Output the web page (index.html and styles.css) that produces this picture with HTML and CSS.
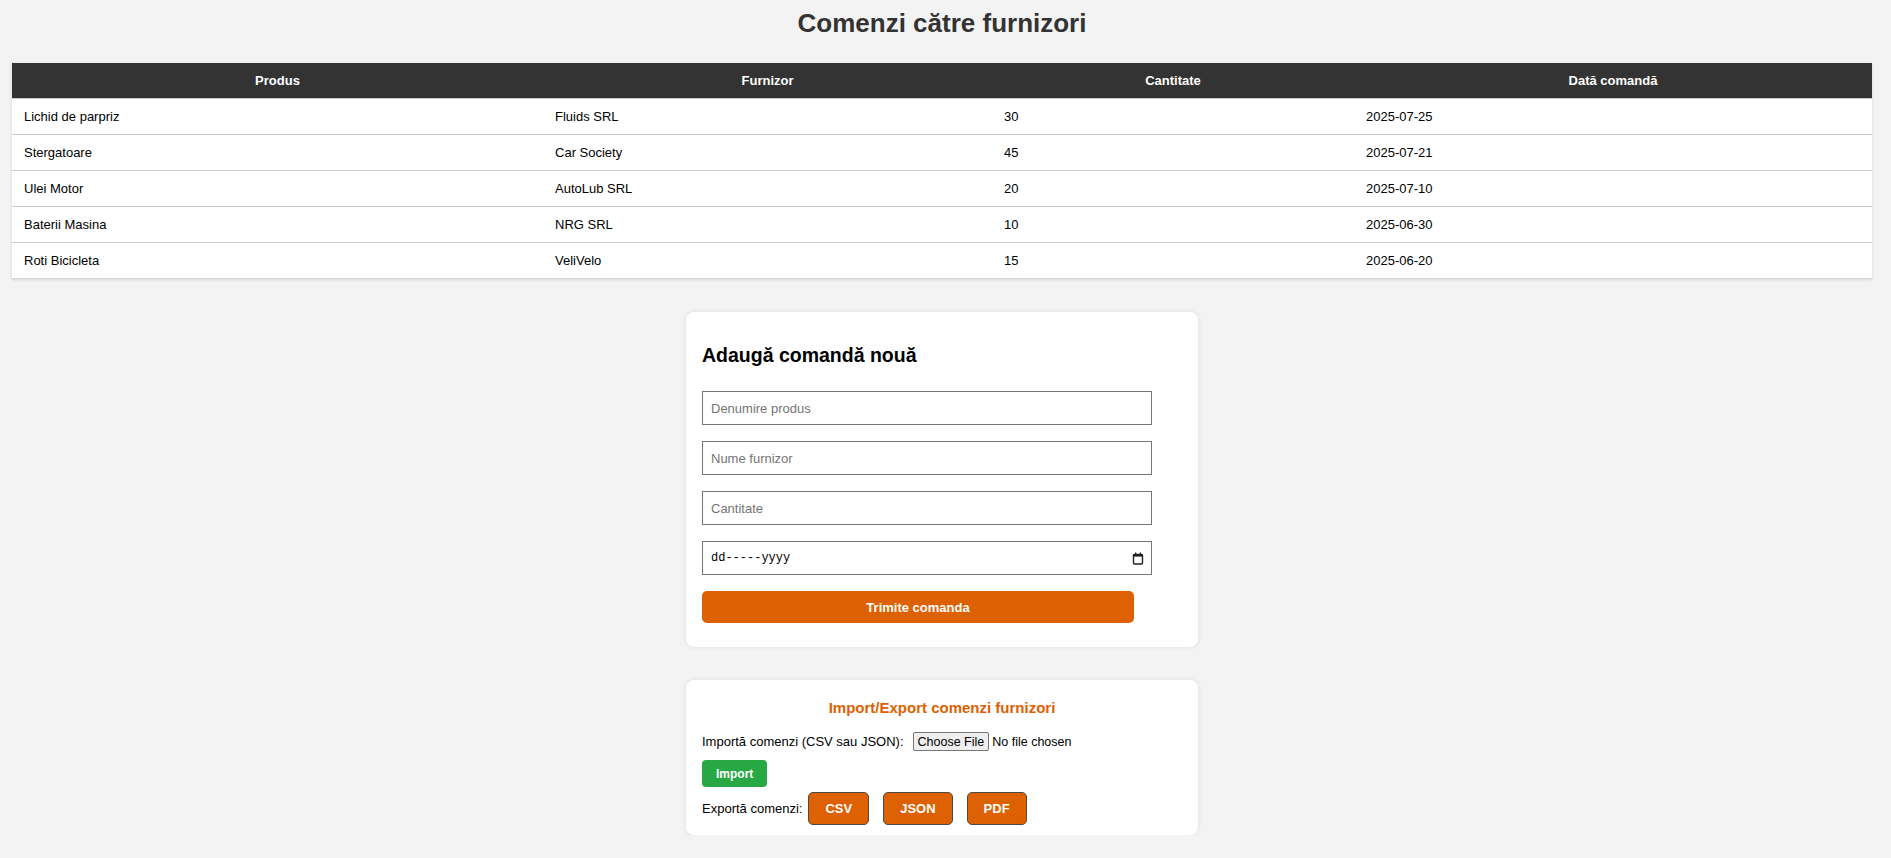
FILE: index.html
```html
<!DOCTYPE html>
<html lang="ro">
<head>
<meta charset="utf-8">
<title>Comenzi către furnizori</title>
<link rel="stylesheet" href="styles.css">
</head>
<body>
<main class="page">
  <h1 class="page-title">Comenzi către furnizori</h1>

  <table class="orders">
    <thead>
      <tr>
        <th class="col-prod">Produs</th>
        <th class="col-furn">Furnizor</th>
        <th class="col-qty">Cantitate</th>
        <th class="col-date">Dată comandă</th>
      </tr>
    </thead>
    <tbody>
      <tr><td>Lichid de parpriz</td><td>Fluids SRL</td><td>30</td><td>2025-07-25</td></tr>
      <tr><td>Stergatoare</td><td>Car Society</td><td>45</td><td>2025-07-21</td></tr>
      <tr><td>Ulei Motor</td><td>AutoLub SRL</td><td>20</td><td>2025-07-10</td></tr>
      <tr><td>Baterii Masina</td><td>NRG SRL</td><td>10</td><td>2025-06-30</td></tr>
      <tr><td>Roti Bicicleta</td><td>VeliVelo</td><td>15</td><td>2025-06-20</td></tr>
    </tbody>
  </table>

  <section class="card form-card">
    <h2 class="card-title">Adaugă comandă nouă</h2>
    <form class="order-form">
      <input class="field" type="text" placeholder="Denumire produs">
      <input class="field" type="text" placeholder="Nume furnizor">
      <input class="field" type="text" placeholder="Cantitate">
      <div class="field date-field">
        <span class="date-text">dd-----yyyy</span>
        <svg class="cal-icon" width="12" height="13" viewBox="0 0 12 13" aria-hidden="true">
          <rect x="1.5" y="2.5" width="9" height="9.5" rx="1" fill="none" stroke="#222" stroke-width="1.4"/>
          <rect x="1" y="2" width="10" height="2.6" fill="#222"/>
          <rect x="3" y="0.5" width="1.3" height="2" fill="#222"/>
          <rect x="7.7" y="0.5" width="1.3" height="2" fill="#222"/>
        </svg>
      </div>
      <button class="submit-btn" type="button">Trimite comanda</button>
    </form>
  </section>

  <section class="card io-card">
    <h3 class="io-title">Import/Export comenzi furnizori</h3>
    <div class="import-row">
      <label class="io-label">Importă comenzi (CSV sau JSON):</label>
      <input class="file-input" type="file">
    </div>
    <div class="import-action">
      <button class="import-btn" type="button">Import</button>
    </div>
    <div class="export-row">
      <span class="io-label export-label">Exportă comenzi:</span>
      <div class="export-buttons">
        <button class="export-btn" type="button">CSV</button>
        <button class="export-btn" type="button">JSON</button>
        <button class="export-btn" type="button">PDF</button>
      </div>
    </div>
  </section>
</main>
</body>
</html>
```

FILE: styles.css
```css
* {
  box-sizing: border-box;
}

html, body {
  margin: 0;
  background: #f3f3f3;
}

body {
  font-family: "Liberation Sans", Arial, sans-serif;
  color: #000;
}

.page {
  padding: 9px 19px 0 12px;
  display: flex;
  flex-direction: column;
  align-items: center;
}

.page-title {
  margin: 0 0 25px;
  font-size: 26px;
  line-height: 29px;
  font-weight: bold;
  color: #333;
  text-align: center;
}

.orders {
  width: 100%;
  border-collapse: collapse;
  background: #fff;
  box-shadow: 0 1px 3px rgba(0, 0, 0, 0.12);
  font-size: 13px;
}

.orders th {
  background: #333;
  color: #fff;
  font-weight: bold;
  line-height: 15px;
  padding: 10px 12px;
  text-align: center;
  border-bottom: 1px solid #ccc;
}

.orders td {
  line-height: 15px;
  padding: 10px 12px;
  text-align: left;
  border-bottom: 1px solid #ccc;
}

.orders tbody tr:last-child td {
  border-bottom: 1px solid #d6d6d6;
}

.col-prod { width: 28.55%; }
.col-furn { width: 24.14%; }
.col-qty { width: 19.46%; }
.col-date { width: 27.85%; }

.card {
  width: 512px;
  background: #fff;
  border-radius: 8px;
  box-shadow: 0 0 4px rgba(0, 0, 0, 0.1);
}

.form-card {
  margin-top: 33px;
  padding: 16px 16px 16px;
}

.card-title {
  margin: 16px 0 25px;
  font-size: 19.5px;
  line-height: 22px;
  font-weight: bold;
  color: #000;
}

.order-form {
  display: flex;
  flex-direction: column;
  align-items: flex-start;
}

.field {
  width: 450px;
  height: 34px;
  margin: 0 0 16px;
  padding: 0 8px;
  border: 1px solid #767676;
  border-radius: 0;
  background: #fff;
  font-family: "Liberation Sans", Arial, sans-serif;
  font-size: 13px;
  color: #000;
  outline: none;
}

.field::placeholder {
  color: #757575;
}

.date-field {
  display: flex;
  align-items: center;
  justify-content: space-between;
  padding: 0 7px 0 8px;
}

.date-text {
  font-family: "Liberation Mono", "DejaVu Sans Mono", monospace;
  font-size: 12px;
  color: #000;
}

.cal-icon {
  display: block;
}

.submit-btn {
  width: 90%;
  height: 32px;
  margin: 0 0 8px;
  border: none;
  border-radius: 5px;
  background: #dd6100;
  color: #fff;
  font-family: "Liberation Sans", Arial, sans-serif;
  font-size: 13px;
  font-weight: bold;
  cursor: pointer;
}

.io-card {
  margin-top: 33px;
  padding: 10px 16px 10px;
}

.io-title {
  margin: 9px 0 16px;
  font-size: 15px;
  line-height: 17px;
  font-weight: bold;
  color: #dd6100;
  text-align: center;
}

.import-row {
  display: flex;
  align-items: center;
  gap: 9px;
  height: 19px;
}

.io-label {
  font-size: 13px;
  line-height: 15px;
  color: #000;
}

.file-input {
  font-family: "Liberation Sans", Arial, sans-serif;
  font-size: 12.5px;
  color: #000;
}

.file-input::file-selector-button {
  font-family: "Liberation Sans", Arial, sans-serif;
  font-size: 12.5px;
  height: 19px;
  padding: 0 4px;
  margin-right: 3px;
  border: 1px solid #767676;
  border-radius: 2px;
  background: #efefef;
  color: #000;
}

.import-action {
  margin-top: 9px;
}

.import-btn {
  height: 27px;
  padding: 0 14px;
  border: none;
  border-radius: 4px;
  background: #28a745;
  color: #fff;
  font-family: "Liberation Sans", Arial, sans-serif;
  font-size: 12px;
  font-weight: bold;
  cursor: pointer;
}

.export-row {
  display: flex;
  align-items: center;
  margin-top: 5px;
}

.export-label {
  margin-right: 6px;
}

.export-buttons {
  display: flex;
  gap: 14px;
}

.export-btn {
  height: 33px;
  padding: 0 16px;
  border: 1px solid #4a4a4a;
  border-radius: 5px;
  background: #dd6100;
  color: #fff;
  font-family: "Liberation Sans", Arial, sans-serif;
  font-size: 13px;
  font-weight: bold;
  cursor: pointer;
}
```
